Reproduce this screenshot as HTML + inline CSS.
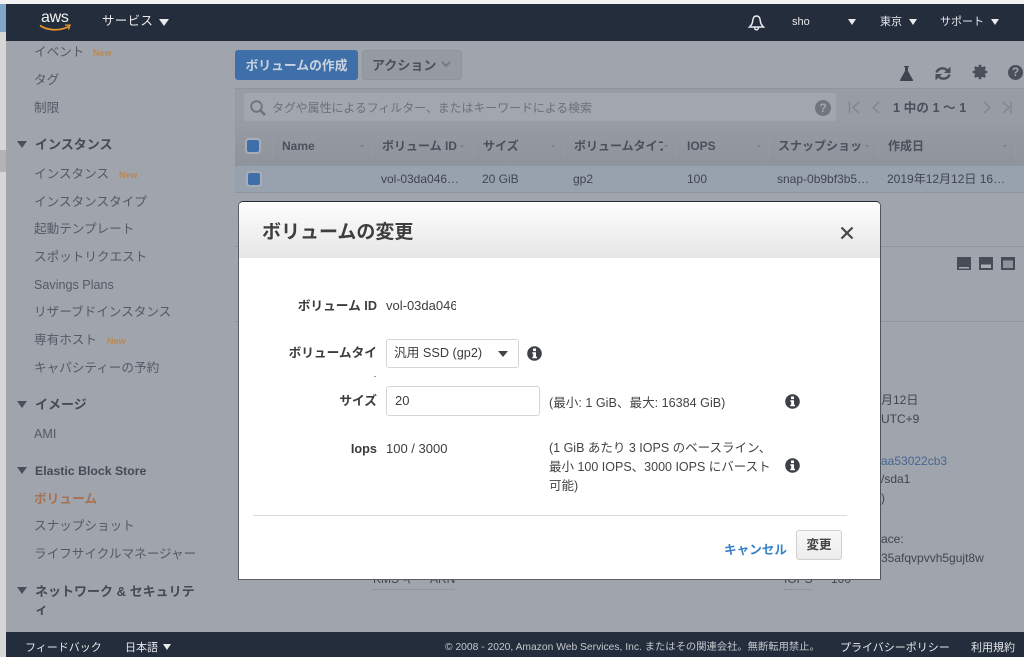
<!DOCTYPE html>
<html lang="ja"><head><meta charset="utf-8"><title>ボリュームの変更</title>
<style>
html,body{margin:0;padding:0}
body{width:1024px;height:657px;position:relative;overflow:hidden;background:#a0a4ac;font-family:"Liberation Sans","Noto Sans CJK JP",sans-serif;color:#4a4f58}
.t{position:absolute;white-space:nowrap;line-height:18px;font-size:13px}
.b{font-weight:700}
.n{color:#b58a5a;font-size:9px;font-weight:700}
.s{color:#545a64;font-size:12.6px}
.h{color:#454a54;font-weight:700;font-size:13px}
.w{color:#e6e8ea;font-size:11px}
.th{color:#4b505a;font-weight:700;font-size:12px}
.td{color:#40454e;font-size:12px}
.tri{position:absolute;width:0;height:0;border-left:5.5px solid transparent;border-right:5.5px solid transparent;border-top:7px solid #4a4f5a}
.wt{position:absolute;width:0;height:0;border-left:4.5px solid transparent;border-right:4.5px solid transparent;border-top:6px solid #e8eaec}
.sep{position:absolute;width:1px;height:24px;top:134px;background:#969aa2}
.sa{position:absolute;top:145px;width:0;height:0;border-left:2.5px solid transparent;border-right:2.5px solid transparent;border-top:3px solid #7d828a}
.cb{position:absolute;width:12px;height:12px;background:#3f6fa8;border-radius:2px;box-shadow:0 0 0 2px #a9adb4}
.m{color:#3d3d3d;font-size:13px}
.ml{color:#3c3c3c;font-weight:700;font-size:12.7px;text-align:right;width:140px}
svg{position:absolute;display:block}
</style></head><body>
<div style="position:absolute;left:0;top:0;width:1024px;height:4px;background:#f2f2f2"></div>
<div style="position:absolute;left:0;top:4px;width:6px;height:653px;background:#d6d6d6"></div>
<div style="position:absolute;left:0;top:4px;width:6px;height:28px;background:#7fa6c9"></div>
<div style="position:absolute;left:0;top:150px;width:6px;height:22px;background:#b3b3b3"></div>

<div style="position:absolute;left:6px;top:4px;width:1018px;height:37px;background:#232d3c"></div>
<div class="t" style="left:41px;top:8px;font-size:16px;color:#f2f2f2;letter-spacing:-.3px;line-height:20px">aws</div>
<svg style="left:39px;top:23px" width="33" height="10" viewBox="0 0 33 10"><path d="M1 2.500C9 8 21 8 30 3.500" fill="none" stroke="#e8962e" stroke-width="1.700"/><path d="M26 2.200L31 2L29.500 6.500" fill="none" stroke="#e8962e" stroke-width="1.300"/></svg>
<div class="t" style="left:102px;top:12px;color:#e8e9eb;font-size:12.500px;letter-spacing:.3px">サービス</div><div class="wt" style="left:159px;top:19px;border-left-width:5px;border-right-width:5px;border-top-width:7px"></div>
<svg style="left:747px;top:14px" width="19" height="19" viewBox="0 0 19 19"><path d="M9.500 2C6.500 2 6 4.500 5.500 8C5.200 10 4 11.500 2.500 13H16.500C15 11.500 13.800 10 13.500 8C13 4.500 12.500 2 9.500 2ZM7.500 13.500C7.500 16.500 11.500 16.500 11.500 13.500" fill="none" stroke="#e8eaec" stroke-width="1.500"/></svg>
<div class="t w" style="left:792px;top:13px">sho</div><div class="wt" style="left:848px;top:19px"></div>
<div class="t w" style="left:880px;top:13px">東京</div><div class="wt" style="left:909px;top:19px"></div>
<div class="t w" style="left:940px;top:13px">サポート</div><div class="wt" style="left:991px;top:19px"></div>

<div class="t s" style="left:34px;top:43px">イベント</div><div class="t n" style="left:93px;top:44px">New</div>
<div class="t s" style="left:34px;top:71px">タグ</div>
<div class="t s" style="left:34px;top:99px">制限</div>
<div class="tri" style="left:17px;top:141px"></div><div class="t h" style="left:35px;top:136px">インスタンス</div>
<div class="t s" style="left:34px;top:165px">インスタンス</div><div class="t n" style="left:119px;top:166px">New</div>
<div class="t s" style="left:34px;top:193px">インスタンスタイプ</div>
<div class="t s" style="left:34px;top:220px">起動テンプレート</div>
<div class="t s" style="left:34px;top:248px">スポットリクエスト</div>
<div class="t s" style="left:34px;top:276px">Savings Plans</div>
<div class="t s" style="left:34px;top:303px">リザーブドインスタンス</div>
<div class="t s" style="left:34px;top:331px">専有ホスト</div><div class="t n" style="left:107px;top:332px">New</div>
<div class="t s" style="left:34px;top:359px">キャパシティーの予約</div>
<div class="tri" style="left:17px;top:401px"></div><div class="t h" style="left:35px;top:396px">イメージ</div>
<div class="t s" style="left:34px;top:425px">AMI</div>
<div class="tri" style="left:17px;top:467px"></div><div class="t h" style="left:35px;top:462px;font-size:12.300px">Elastic Block Store</div>
<div class="t b" style="left:34px;top:490px;color:#a8714f;font-size:12.700px">ボリューム</div>
<div class="t s" style="left:34px;top:517px">スナップショット</div>
<div class="t s" style="left:34px;top:545px">ライフサイクルマネージャー</div>
<div class="tri" style="left:17px;top:587px"></div><div class="t h" style="left:35px;top:583px">ネットワーク &amp; セキュリテ</div><div class="t h" style="left:35px;top:601px">ィ</div>

<div class="t b" style="left:235px;top:50px;width:123px;height:30px;line-height:31px;text-align:center;background:#3f6fa8;border-radius:3px;color:#c9d3e0;font-size:12.800px">ボリュームの作成</div>
<div class="t b" style="left:362px;top:50px;width:100px;height:30px;box-sizing:border-box;border:1px solid #90949c;line-height:29px;padding-left:9px;background:#969aa2;border-radius:3px;color:#4c5059;font-size:13px">アクション</div>
<svg style="left:441px;top:61px" width="10" height="7" viewBox="0 0 10 7"><path d="M1 1L5 5L9 1" fill="none" stroke="#767b84" stroke-width="2"/></svg>

<svg style="left:898px;top:65px" width="17" height="17" viewBox="0 0 17 17"><path d="M6 1H11V2H10V6L15 15C15.300 15.800 15 16 14 16H3C2 16 1.700 15.800 2 15L7 6V2H6Z" fill="#3f444e"/></svg>
<svg style="left:933px;top:64px" width="20" height="19" viewBox="0 0 20 19"><path d="M3.500 8.500C4.500 5 8.500 3.500 12 4.700L15.500 7M16.500 10.500C15.500 14 11.500 15.500 8 14.300L4.500 12" fill="none" stroke="#4a4f59" stroke-width="2.400"/><path d="M17.500 2.500V9H11ZM2.500 16.500V10H9Z" fill="#4a4f59"/></svg>
<svg style="left:972px;top:64px" width="16" height="16" viewBox="0 0 16 16"><circle cx="8" cy="8" r="3.800" fill="none" stroke="#4a4f59" stroke-width="3.400"/><path d="M8 .8V15.200M.8 8H15.200M2.900 2.900L13.100 13.100M13.100 2.900L2.900 13.100" stroke="#4a4f59" stroke-width="2.600"/></svg>
<div style="position:absolute;left:1008px;top:65px;width:15px;height:15px;border-radius:50%;background:#4a4f59;color:#a0a4ac;font:700 12px/15px 'Liberation Sans',sans-serif;text-align:center">?</div>

<div style="position:absolute;left:235px;top:88px;width:789px;height:1px;background:#90949c"></div>
<div style="position:absolute;left:235px;top:89px;width:789px;height:37px;background:#989ca4"></div>
<div style="position:absolute;left:244px;top:93px;width:592px;height:28px;background:#a2a6ae;border-radius:3px"></div>
<svg style="left:249px;top:99px" width="18" height="18" viewBox="0 0 18 18"><circle cx="7.500" cy="7.500" r="5.300" fill="none" stroke="#6d727b" stroke-width="1.800"/><path d="M11.500 11.500L16 16" stroke="#6d727b" stroke-width="2.600"/></svg>
<div class="t" style="left:272px;top:99px;color:#6b7079;font-size:11.900px">タグや属性によるフィルター、またはキーワードによる検索</div>
<div style="position:absolute;left:815px;top:100px;width:16px;height:16px;border-radius:50%;background:#70757e;color:#a2a6ae;font:700 12px/16px 'Liberation Sans',sans-serif;text-align:center">?</div>
<svg style="left:848px;top:100px" width="34" height="15" viewBox="0 0 34 15"><path d="M1.500 1.500V13.500M11 2L5 7.500L11 13M31 2L25 7.500L31 13" fill="none" stroke="#7f848d" stroke-width="1.300"/></svg>
<svg style="left:980px;top:100px" width="32" height="15" viewBox="0 0 32 15"><path d="M4 2L10 7.500L4 13M23 2L29 7.500L23 13M31 1.500V13.500" fill="none" stroke="#7f848d" stroke-width="1.300"/></svg>
<div class="t b" style="left:893px;top:99px;color:#4b505a;font-size:12.700px">1 中の 1 〜 1</div>

<div style="position:absolute;left:235px;top:126px;width:789px;height:40px;background:linear-gradient(#969aa2,#8f939b)"></div>
<div style="position:absolute;left:235px;top:166px;width:789px;height:26px;background:#98a2af;border-bottom:1px solid #8f939b"></div>
<div class="cb" style="left:247px;top:140px"></div><div class="cb" style="left:248px;top:173px"></div>
<div class="sep" style="left:272px"></div><div class="sep" style="left:372px"></div><div class="sep" style="left:473px"></div><div class="sep" style="left:564px"></div><div class="sep" style="left:676px"></div><div class="sep" style="left:768px"></div><div class="sep" style="left:878px"></div><div class="sep" style="left:1015px"></div>
<div class="sa" style="left:360px"></div><div class="sa" style="left:460px"></div><div class="sa" style="left:551px"></div><div class="sa" style="left:664px"></div><div class="sa" style="left:757px"></div><div class="sa" style="left:865px"></div><div class="sa" style="left:1003px"></div>
<div class="t th" style="left:282px;top:137px">Name</div>
<div class="t th" style="left:382px;top:137px">ボリューム ID</div>
<div class="t th" style="left:483px;top:137px">サイズ</div>
<div class="t th" style="left:574px;top:137px;width:89px;overflow:hidden">ボリュームタイプ</div>
<div class="t th" style="left:687px;top:137px">IOPS</div>
<div class="t th" style="left:778px;top:137px;width:84px;overflow:hidden">スナップショット</div>
<div class="t th" style="left:888px;top:137px">作成日</div>
<div class="t td" style="left:381px;top:170px">vol-03da046…</div>
<div class="t td" style="left:482px;top:170px">20 GiB</div>
<div class="t td" style="left:573px;top:170px">gp2</div>
<div class="t td" style="left:687px;top:170px">100</div>
<div class="t td" style="left:777px;top:170px">snap-0b9bf3b5…</div>
<div class="t td" style="left:887px;top:170px">2019年12月12日 16…</div>

<div style="position:absolute;left:235px;top:246px;width:789px;height:1px;background:#90949c"></div>
<div style="position:absolute;left:235px;top:321px;width:789px;height:1px;background:#90949c"></div>
<svg style="left:957px;top:257px" width="60" height="14" viewBox="0 0 60 14"><rect width="14" height="13" fill="#474c57"/><rect x="2" y="10" width="10" height="1.500" fill="#a9adb4"/><rect x="22" width="14" height="13" fill="#474c57"/><rect x="24" y="7.500" width="10" height="3.500" fill="#a9adb4"/><rect x="44" width="14" height="13" fill="#474c57"/><rect x="46" y="3.500" width="10" height="7.500" fill="#8f939b"/></svg>

<div class="t td" style="left:881px;top:391px">月12日</div>
<div class="t td" style="left:881px;top:410px">UTC+9</div>
<div class="t td" style="left:881px;top:452px;color:#47678f">aa53022cb3</div>
<div class="t td" style="left:881px;top:470px">/sda1</div>
<div class="t td" style="left:881px;top:489px">)</div>
<div class="t td" style="left:881px;top:530px">ace:</div>
<div class="t td" style="left:881px;top:549px">35afqvpvvh5gujt8w</div>
<div class="t td" style="left:784px;top:570px">IOPS</div><div class="t td" style="left:831px;top:570px">100</div>
<div style="position:absolute;left:784px;top:589px;width:28px;border-top:1px dotted #80858d"></div>
<div class="t td" style="left:373px;top:570px">KMS キー</div><div class="t td" style="left:430px;top:570px">ARN</div>
<div style="position:absolute;left:373px;top:589px;width:81px;border-top:1px dotted #80858d"></div>

<div style="position:absolute;left:238px;top:201px;width:643px;height:379px;box-sizing:border-box;border:1px solid #24272c;border-right-color:#50545b;border-bottom-color:#5c6066;border-left-color:#5c6066;border-width:1px 1.500px 1.500px 1.500px;border-radius:5px 5px 0 0;background:#fff;overflow:hidden">
<div style="height:56px;background:linear-gradient(#fefefe,#e6e6e6)"></div></div>
<div class="t b" style="left:262px;top:219px;font-size:19px;line-height:24px;color:#3e3e3e;padding-top:2px">ボリュームの変更</div>
<svg style="left:840px;top:226px" width="14" height="14" viewBox="0 0 14 14"><path d="M1.500 1.500L12.500 12.500M12.500 1.500L1.500 12.500" stroke="#484848" stroke-width="2.200"/></svg>

<div class="t ml" style="left:237px;top:297px">ボリューム ID</div>
<div class="t m" style="left:386px;top:297px;width:70px;overflow:hidden">vol-03da046</div>
<div class="t ml" style="left:237px;top:344px">ボリュームタイ</div>
<div style="position:absolute;left:386px;top:339px;width:133px;height:29px;box-sizing:border-box;border:1px solid #d5d5d5;border-radius:3px"></div>
<div class="t m" style="left:394px;top:344px;font-size:12.700px">汎用 SSD (gp2)</div>
<div style="position:absolute;left:498px;top:351px;width:0;height:0;border-left:5px solid transparent;border-right:5px solid transparent;border-top:6px solid #444"></div>
<div style="position:absolute;left:374px;top:376px;width:2px;height:1px;background:#999"></div>
<div class="t ml" style="left:237px;top:392px">サイズ</div>
<div style="position:absolute;left:386px;top:386px;width:154px;height:30px;box-sizing:border-box;border:1px solid #d5d5d5;border-radius:3px"></div>
<div class="t m" style="left:395px;top:392px">20</div>
<div class="t" style="left:549px;top:394px;font-size:12.600px;color:#444">(最小: 1 GiB、最大: 16384 GiB)</div>
<div class="t ml" style="left:237px;top:440px">Iops</div>
<div class="t m" style="left:386px;top:440px">100 / 3000</div>
<div class="t" style="left:549px;top:439px;font-size:12.500px;line-height:19px;color:#444">(1 GiB あたり 3 IOPS のベースライン、<br>最小 100 IOPS、3000 IOPS にバースト<br>可能)</div>
<svg style="left:527px;top:346px" width="15" height="15" viewBox="0 0 15 15"><circle cx="7.500" cy="7.500" r="7.300" fill="#3d4047"/><rect x="6" y="2.500" width="3" height="2.600" fill="#fff"/><path d="M5.300 6.300H9V10.800H10V12.300H5.300V10.800H6.200V7.800H5.300Z" fill="#fff"/></svg>
<svg style="left:785px;top:394px" width="15" height="15" viewBox="0 0 15 15"><circle cx="7.500" cy="7.500" r="7.300" fill="#3d4047"/><rect x="6" y="2.500" width="3" height="2.600" fill="#fff"/><path d="M5.300 6.300H9V10.800H10V12.300H5.300V10.800H6.200V7.800H5.300Z" fill="#fff"/></svg>
<svg style="left:785px;top:458px" width="15" height="15" viewBox="0 0 15 15"><circle cx="7.500" cy="7.500" r="7.300" fill="#3d4047"/><rect x="6" y="2.500" width="3" height="2.600" fill="#fff"/><path d="M5.300 6.300H9V10.800H10V12.300H5.300V10.800H6.200V7.800H5.300Z" fill="#fff"/></svg>
<div style="position:absolute;left:253px;top:515px;width:594px;height:1px;background:#dcdcdc"></div>
<div class="t b" style="left:724px;top:541px;font-size:12.600px;color:#3b82c9">キャンセル</div>
<div class="t b" style="left:796px;top:530px;width:46px;height:30px;box-sizing:border-box;border:1px solid #d0d0d0;border-radius:3px;background:linear-gradient(#f8f8f8,#ececec);text-align:center;line-height:28px;font-size:12.500px;color:#444">変更</div>

<div style="position:absolute;left:6px;top:632px;width:1018px;height:25px;background:#232d3c"></div>
<div class="t w" style="left:25px;top:639px">フィードバック</div>
<div class="t w" style="left:125px;top:639px">日本語</div><div class="wt" style="left:163px;top:644px"></div>
<div class="t" style="left:445px;top:639px;color:#c5c8cc;font-size:10.300px">© 2008 - 2020, Amazon Web Services, Inc. またはその関連会社。無断転用禁止。</div>
<div class="t w" style="left:840px;top:639px">プライバシーポリシー</div>
<div class="t w" style="left:971px;top:639px">利用規約</div>
</body></html>
